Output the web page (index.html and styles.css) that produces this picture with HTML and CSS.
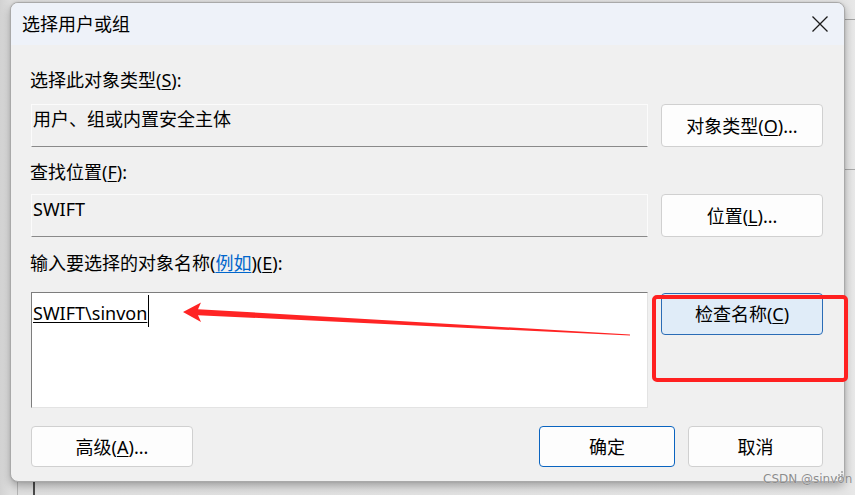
FILE: index.html
```html
<!DOCTYPE html>
<html lang="zh-CN">
<head>
<meta charset="utf-8">
<title>选择用户或组</title>
<link rel="stylesheet" href="styles.css">
</head>
<body>
<div class="screen">
  <div class="desk-line dl-v1"></div>
  <div class="desk-line dl-v2"></div>
  <div class="desk-line dl-h1"></div>
  <div class="desk-line dl-h2"></div>

  <div class="window">
    <div class="titlebar">
      <span class="title">选择用户或组</span>
      <svg class="close" width="16" height="16" viewBox="0 0 16 16">
        <path d="M0.5 0.5 L15.5 15.5 M15.5 0.5 L0.5 15.5" stroke="#1b1b1b" stroke-width="1.3" fill="none"/>
      </svg>
    </div>
    <div class="content">
      <div class="label l1">选择此对象类型(<u>S</u>):</div>
      <div class="row r1">
        <div class="field">用户、组或内置安全主体</div>
        <div class="btn">对象类型(<u>O</u>)...</div>
      </div>
      <div class="label l2">查找位置(<u>F</u>):</div>
      <div class="row r2">
        <div class="field">SWIFT</div>
        <div class="btn">位置(<u>L</u>)...</div>
      </div>
      <div class="label l3">输入要选择的对象名称(<span class="link">例如</span>)(<u>E</u>):</div>
      <div class="row r3">
        <div class="textarea">
          <span class="entry">SWIFT\sinvon</span><span class="caret"></span>
        </div>
        <div class="btn btn-check">检查名称(<u>C</u>)</div>
      </div>
      <div class="footer">
        <div class="btn btn-adv">高级(<u>A</u>)...</div>
        <div class="btn btn-ok">确定</div>
        <div class="btn btn-cancel">取消</div>
      </div>
    </div>
  </div>

  <svg class="annot" width="855" height="495" viewBox="0 0 855 495">
    <polygon fill="#ff2424" points="183,312 201,302.5 198,309.2 630,334.4 630,335.6 198,315.2 201,322"/>
    <rect x="654" y="297" width="192" height="83" rx="3" ry="3" fill="none" stroke="#ff2020" stroke-width="4"/>
  </svg>

  <svg class="grip" width="8" height="8" viewBox="0 0 8 8">
    <rect x="6" y="0" width="2" height="2" fill="#b5b5b5"/>
    <rect x="3" y="3" width="2" height="2" fill="#b5b5b5"/>
    <rect x="6" y="3" width="2" height="2" fill="#b5b5b5"/>
    <rect x="0" y="6" width="2" height="2" fill="#b5b5b5"/>
    <rect x="3" y="6" width="2" height="2" fill="#b5b5b5"/>
    <rect x="6" y="6" width="2" height="2" fill="#b5b5b5"/>
  </svg>
  <div class="watermark">CSDN @sinvon</div>
</div>
</body>
</html>
```

FILE: styles.css
```css
* { box-sizing: border-box; }

html, body {
  margin: 0;
  padding: 0;
}

body {
  background: #dcdcdc;
  font-family: "Noto Sans", "Noto Sans CJK SC", sans-serif;
  font-size: 18px;
  line-height: 24px;
  color: #000;
}

.screen {
  position: relative;
  width: 855px;
  height: 495px;
  overflow: hidden;
  background: linear-gradient(90deg, #d2d2d2 0px, #dedede 10px, #e4e4e4 845px, #e8e8e8 855px);
  padding-top: 2px;
  padding-left: 10px;
}

.desk-line {
  position: absolute;
}
.dl-v1 { left: 17px; top: 482px; width: 1px; height: 13px; background: #b4b4b4; }
.dl-v2 { left: 33px; top: 482px; width: 2px; height: 13px; background: #4a4a4a; }
.dl-h1 { left: 845px; top: 19px; width: 10px; height: 1px; background: #a2a2a2; }
.dl-h2 { left: 845px; top: 169px; width: 10px; height: 1px; background: #a8a8a8; }

.window {
  position: relative;
  width: 835px;
  height: 480px;
  border: 1px solid #a9a9a9;
  border-radius: 8px;
  background: #f0f0f0;
  overflow: hidden;
  box-shadow: 0 4px 9px rgba(0, 0, 0, 0.28), 0 0 2px rgba(0, 0, 0, 0.12);
  display: flex;
  flex-direction: column;
}

.titlebar {
  height: 42px;
  background: #eef2f9;
  display: flex;
  align-items: center;
  justify-content: space-between;
  padding-left: 11px;
  padding-right: 16px;
}

.title {
  font-size: 18px;
  line-height: 24px;
  color: #000;
}

.close {
  display: block;
  margin-top: -1px;
}

.content {
  width: 833px;
  padding: 0 21px 0 20px;
  display: flex;
  flex-direction: column;
}

.label {
  height: 24px;
  margin-left: -1px;
  white-space: nowrap;
}
.l1 { margin-top: 23px; }
.l2 { margin-top: 13px; }
.l3 { margin-top: 14px; }

.label u, .btn u { text-decoration-thickness: 1px; text-underline-offset: 2px; }

.link {
  color: #0066cc;
  text-decoration: underline;
  text-decoration-thickness: 1px;
  text-underline-offset: 2px;
}

.row {
  display: grid;
  grid-template-columns: 617px 162px;
  column-gap: 13px;
  align-items: start;
}
.r1 { margin-top: 12px; }
.r2 { margin-top: 10px; }
.r3 { margin-top: 17px; }

.field {
  height: 43px;
  border: 1px solid #fbfbfb;
  border-bottom-color: #8a8a8a;
  padding: 2px 1px 0 1px;
  white-space: nowrap;
}

.btn {
  height: 43px;
  border: 1px solid #d0d0d0;
  border-radius: 4px;
  background: #fdfdfd;
  display: flex;
  align-items: center;
  justify-content: center;
  white-space: nowrap;
}

.textarea {
  height: 116px;
  background: #fff;
  border: 1px solid #e3e3e3;
  border-top-color: #7d7d7d;
  border-left-color: #7d7d7d;
  padding: 2px 1px 0 1px;
  display: flex;
  align-items: flex-start;
}

.entry {
  margin-top: 6px;
  line-height: 24px;
  text-decoration: underline;
  text-decoration-thickness: 1px;
  text-underline-offset: 2px;
}

.caret {
  display: block;
  width: 1px;
  height: 32px;
  margin-left: 1px;
  background: #000;
}

.btn-check {
  margin-top: 1px;
  height: 42px;
  background: #e0ecf8;
  border-color: #2a6cb6;
}

.footer {
  margin-top: 18px;
  display: flex;
  gap: 13px;
}

.footer .btn { height: 41px; }
.btn-adv { width: 162px; }
.btn-ok {
  width: 136px;
  margin-left: auto;
  border-color: #0a64c0;
}
.btn-cancel { width: 135px; }

.annot {
  position: absolute;
  left: 0;
  top: 0;
  pointer-events: none;
}

.grip {
  position: absolute;
  left: 835px;
  top: 471px;
}

.watermark {
  position: absolute;
  left: 763px;
  top: 472px;
  font-family: "DejaVu Sans", sans-serif;
  font-size: 12px;
  line-height: 15px;
  color: #8c8c8c;
  text-shadow: 0 0 1px rgba(255, 255, 255, 0.8);
  white-space: nowrap;
}
```
